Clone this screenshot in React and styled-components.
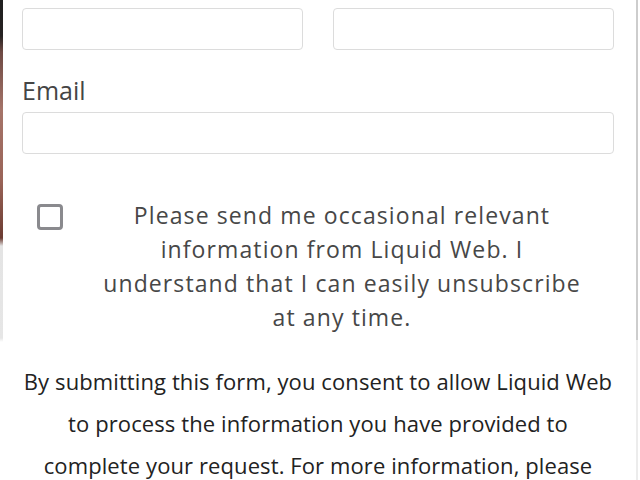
import React from "react";
import styled, { createGlobalStyle } from "styled-components";

const Global = createGlobalStyle`
  html, body { margin: 0; padding: 0; background: #fff; }
  body { font-family: "Open Sans", "Noto Sans", sans-serif; }
  * { box-sizing: border-box; }
`;

const Frame = styled.div`
  display: flex;
  width: 640px;
  height: 480px;
  overflow: hidden;
  background: #fff;
`;

const LeftEdge = styled.div`
  flex: 0 0 3px;
  background: linear-gradient(
    to bottom,
    #1f1f1f 0px,
    #262222 36px,
    #6e4a44 52px,
    #a57469 110px,
    #9a6458 180px,
    #6c3c32 238px,
    #e4e4e4 246px,
    #e6e6e6 338px,
    #ffffff 342px
  );
`;

const Main = styled.div`
  flex: 1;
  min-width: 0;
  padding: 8px 22px 0 19px;
`;

const RightEdge = styled.div`
  flex: 0 0 2px;
  background: linear-gradient(to bottom, #cdcdcd 0, #cdcdcd 340px, #ececec 340px);
`;

const Gutter = styled.div`
  flex: 0 0 2px;
`;

const NameRow = styled.div`
  display: grid;
  grid-template-columns: 1fr 1fr;
  column-gap: 30px;
`;

const Input = styled.input`
  display: block;
  width: 100%;
  height: 42px;
  border: 1px solid #dcdcdc;
  border-radius: 4px;
  background: #fff;
  padding: 0 12px;
  font: inherit;
  outline: none;
`;

const Label = styled.label`
  display: block;
  margin-top: 25px;
  margin-bottom: 7px;
  font-size: 25px;
  line-height: 30px;
  color: #454545;
`;

const OptInRow = styled.div`
  display: flex;
  align-items: flex-start;
  margin-top: 44px;
`;

const Box = styled.span`
  flex: 0 0 26px;
  width: 26px;
  height: 26px;
  margin: 6px 0 0 15px;
  border: 3px solid #8a8a8e;
  border-radius: 4px;
  background: #fff;
`;

const OptInText = styled.p`
  flex: 1;
  margin: 0;
  padding: 0 30px 0 37px;
  text-align: center;
  font-size: 23px;
  line-height: 34px;
  letter-spacing: 1.1px;
  color: #474747;
`;

const Consent = styled.p`
  margin: 26px 0 0 0;
  text-align: center;
  font-size: 22px;
  line-height: 42px;
  letter-spacing: 0.1px;
  color: #222;
`;

export default function App() {
  return (
    <>
      <Global />
      <Frame>
        <LeftEdge />
        <Main>
          <NameRow>
            <Input aria-label="First name" />
            <Input aria-label="Last name" />
          </NameRow>
          <Label>Email</Label>
          <Input aria-label="Email" />
          <OptInRow>
            <Box />
            <OptInText>
              Please send me occasional relevant information from Liquid Web. I understand that I can easily unsubscribe at any time.
            </OptInText>
          </OptInRow>
          <Consent>
            By submitting this form, you consent to allow Liquid Web to process the information you have provided to complete your request. For more information, please
          </Consent>
        </Main>
        <RightEdge />
        <Gutter />
      </Frame>
    </>
  );
}
